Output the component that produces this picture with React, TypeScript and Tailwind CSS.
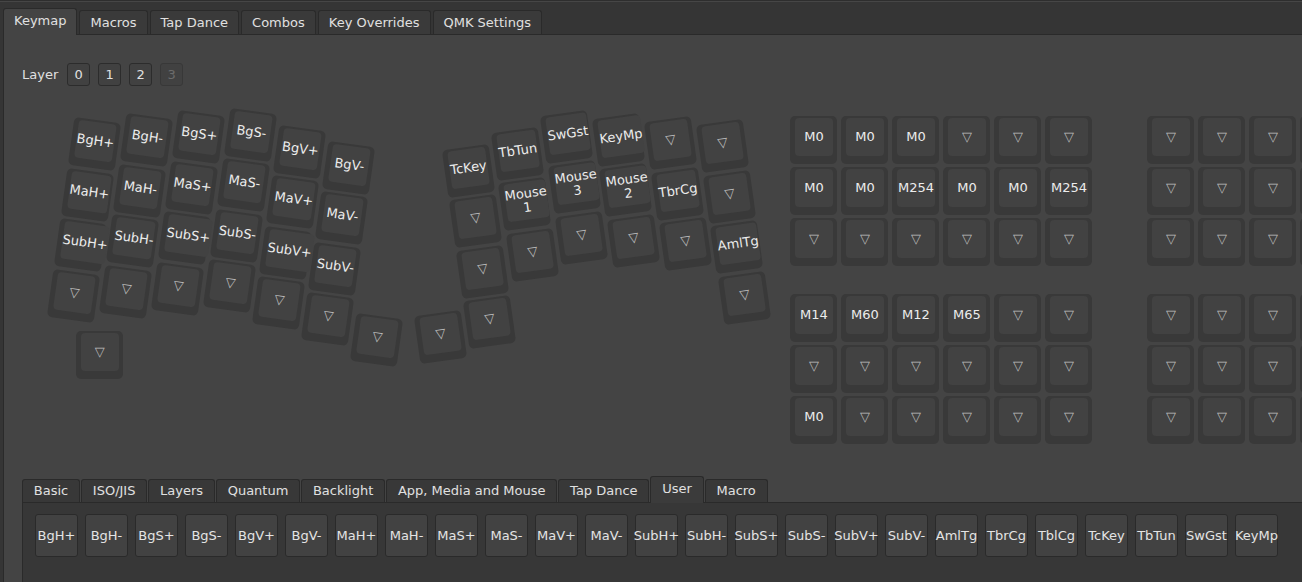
import React from "react"

const TOP_TABS = ["Keymap", "Macros", "Tap Dance", "Combos", "Key Overrides", "QMK Settings"]
const BOTTOM_TABS = ["Basic", "ISO/JIS", "Layers", "Quantum", "Backlight", "App, Media and Mouse", "Tap Dance", "User", "Macro"]
const USER_KEYS = [
  "BgH+", "BgH-", "BgS+", "BgS-", "BgV+", "BgV-",
  "MaH+", "MaH-", "MaS+", "MaS-", "MaV+", "MaV-",
  "SubH+", "SubH-", "SubS+", "SubS-", "SubV+", "SubV-",
  "AmlTg", "TbrCg", "TblCg", "TcKey", "TbTun", "SwGst", "KeyMp",
]

const T = "▽"

const LEFT_ROWS = [
  ["BgH+", "BgH-", "BgS+", "BgS-", "BgV+", "BgV-"],
  ["MaH+", "MaH-", "MaS+", "MaS-", "MaV+", "MaV-"],
  ["SubH+", "SubH-", "SubS+", "SubS-", "SubV+", "SubV-"],
  [T, T, T, T, T, T],
]
const LEFT_OFFS = [0, -11, -21, -31, -21, -12]

const RIGHT_ROWS: (string | null)[][] = [
  ["TcKey", "TbTun", "SwGst", "KeyMp", T, T],
  [T, "Mouse\n1", "Mouse\n3", "Mouse\n2", "TbrCg", T],
  [T, T, T, T, T, "AmlTg"],
  [T, null, null, null, null, T],
]
const RIGHT_OFFS = [0, -10, -20, -10, 1, 11]

// macro grids (right side of the canvas)
const GRID_A_TOP = [
  ["M0", "M0", "M0", T, T, T],
  ["M0", "M0", "M254", "M0", "M0", "M254"],
  [T, T, T, T, T, T],
]
const GRID_A_BOTTOM = [
  ["M14", "M60", "M12", "M65", T, T],
  [T, T, T, T, T, T],
  ["M0", T, T, T, T, T],
]
const GRID_B = [
  [T, T, T, T, T, T],
  [T, T, T, T, T, T],
  [T, T, T, T, T, T],
]

type Placed = { label: string; x: number; y: number; a: number }

function place(origin: [number, number], angle: number, ux: number, uy: number) {
  const r = (angle * Math.PI) / 180
  return {
    x: origin[0] + ux * Math.cos(r) - uy * Math.sin(r),
    y: origin[1] + ux * Math.sin(r) + uy * Math.cos(r),
  }
}

function buildKeys(): Placed[] {
  const out: Placed[] = []
  const lo: [number, number] = [90.6, 43]
  LEFT_ROWS.forEach((row, r) =>
    row.forEach((label, c) => {
      const p = place(lo, 8, c * 51, r * 51 + LEFT_OFFS[c])
      out.push({ label, x: p.x, y: p.y, a: 8 })
    })
  )
  const lt = place(lo, 8, 306, 155)
  out.push({ label: T, x: lt.x, y: lt.y, a: 8 })
  out.push({ label: T, x: 95.3, y: 253.7, a: 0 })

  const ro: [number, number] = [464.7, 69.7]
  RIGHT_ROWS.forEach((row, r) =>
    row.forEach((label, c) => {
      if (!label) return
      const p = place(ro, -8, c * 51, r * 51 + RIGHT_OFFS[c])
      out.push({ label, x: p.x, y: p.y, a: -8 })
    })
  )
  const rt = place(ro, -8, -51, 161)
  out.push({ label: T, x: rt.x, y: rt.y, a: -8 })
  return out
}

function Keycap({ label }: { label: string }) {
  const trns = label === T
  return (
    <div className="w-[47px] h-[48px] rounded-[5px] bg-[#393939] pt-[2px] pl-[5px] pr-[4px] pb-[8px] flex">
      <div
        className={
          trns
            ? "flex-1 rounded-[4px] bg-[#424242] flex flex-col items-center justify-center whitespace-nowrap text-[#bcbcbc] text-[13px]"
            : "flex-1 rounded-[4px] bg-[#424242] flex flex-col items-center justify-center whitespace-nowrap text-[#ececec] text-[13px] leading-[14px]"
        }
      >
        {label.split("\n").map((l, i) => (
          <span key={i}>{l}</span>
        ))}
      </div>
    </div>
  )
}

function Grid({ rows }: { rows: string[][] }) {
  return (
    <div className="grid grid-cols-[repeat(6,47px)] gap-x-[4px] gap-y-[3px]">
      {rows.flat().map((l, i) => (
        <Keycap key={i} label={l} />
      ))}
    </div>
  )
}

export default function App() {
  const keys = buildKeys()
  return (
    <div className="w-[1302px] h-[582px] overflow-hidden bg-[#353535] font-['DejaVu_Sans',sans-serif] text-[13px] text-[#e0e0e0]">
      <div className="h-[2px] bg-[#2e2e2e] border-b border-[#464646]" />
      {/* top tabs */}
      <div className="flex items-end gap-[2px] pl-[3px] h-[32px]">
        {TOP_TABS.map((t, i) =>
          i === 0 ? (
            <div
              key={t}
              className="relative z-10 -mb-px h-[27px] px-[10px] pt-[2px] flex items-start bg-[#444444] border border-b-0 border-[#2a2a2a] rounded-t-[3px]"
            >
              <span className="leading-[20px]">{t}</span>
            </div>
          ) : (
            <div
              key={t}
              className="h-[24px] px-[10px] flex items-center bg-[#3a3a3a] border border-b-0 border-[#2a2a2a] rounded-t-[3px]"
            >
              {t}
            </div>
          )
        )}
      </div>

      {/* keymap pane */}
      <div className="ml-[3px] w-[1400px] h-[560px] bg-[#444444] border border-[#2a2a2a]">
        <div className="flex items-center pl-[18px] pt-[28px]">
          <span className="mr-[9px]">Layer</span>
          <div className="flex gap-[8px]">
            {["0", "1", "2"].map((n) => (
              <div
                key={n}
                className="w-[23px] h-[23px] rounded-[3px] border border-[#2c2c2c] bg-[#414141] flex items-center justify-center"
              >
                {n}
              </div>
            ))}
            <div className="w-[23px] h-[23px] rounded-[3px] border border-[#383838] bg-[#414141] flex items-center justify-center text-[#6c6c6c]">
              3
            </div>
          </div>
        </div>

        {/* keyboard canvas */}
        <div className="mt-[15px] h-[375px] flex">
          <div className="relative w-[786px] h-full shrink-0">
            {keys.map((k, i) => (
              <div
                key={i}
                className="absolute"
                style={{ left: k.x - 23.5, top: k.y - 24, transform: `rotate(${k.a}deg)` }}
              >
                <Keycap label={k.label} />
              </div>
            ))}
          </div>
          <div className="pt-[15px] flex flex-col gap-[28px]">
            <div className="flex gap-[55px]">
              <Grid rows={GRID_A_TOP} />
              <Grid rows={GRID_B} />
            </div>
            <div className="flex gap-[55px]">
              <Grid rows={GRID_A_BOTTOM} />
              <Grid rows={GRID_B} />
            </div>
          </div>
        </div>

        {/* bottom keycode tabs */}
        <div className="ml-[18px]">
          <div className="flex items-end gap-[1px] h-[26px]">
            {BOTTOM_TABS.map((t) =>
              t === "User" ? (
                <div
                  key={t}
                  className="relative z-10 -mb-px h-[27px] px-[10.8px] pt-[2px] flex items-start bg-[#3b3b3b] border border-b-0 border-[#2a2a2a] rounded-t-[3px]"
                >
                  <span className="leading-[20px]">{t}</span>
                </div>
              ) : (
                <div
                  key={t}
                  className="h-[23px] px-[10.8px] flex items-center bg-[#383838] border border-b-0 border-[#2a2a2a] rounded-t-[3px]"
                >
                  {t}
                </div>
              )
            )}
          </div>
          <div className="h-[200px] bg-[#373737] border border-[#2a2a2a] pt-[11px] pl-[12px]">
            <div className="flex gap-[7px]">
              {USER_KEYS.map((k) => (
                <div
                  key={k}
                  className="w-[43px] h-[43px] shrink-0 rounded-[3px] border border-[#2a2a2a] bg-[#424242] flex items-center justify-center whitespace-nowrap text-[#e4e4e4]"
                >
                  {k}
                </div>
              ))}
            </div>
          </div>
        </div>
      </div>
    </div>
  )
}
